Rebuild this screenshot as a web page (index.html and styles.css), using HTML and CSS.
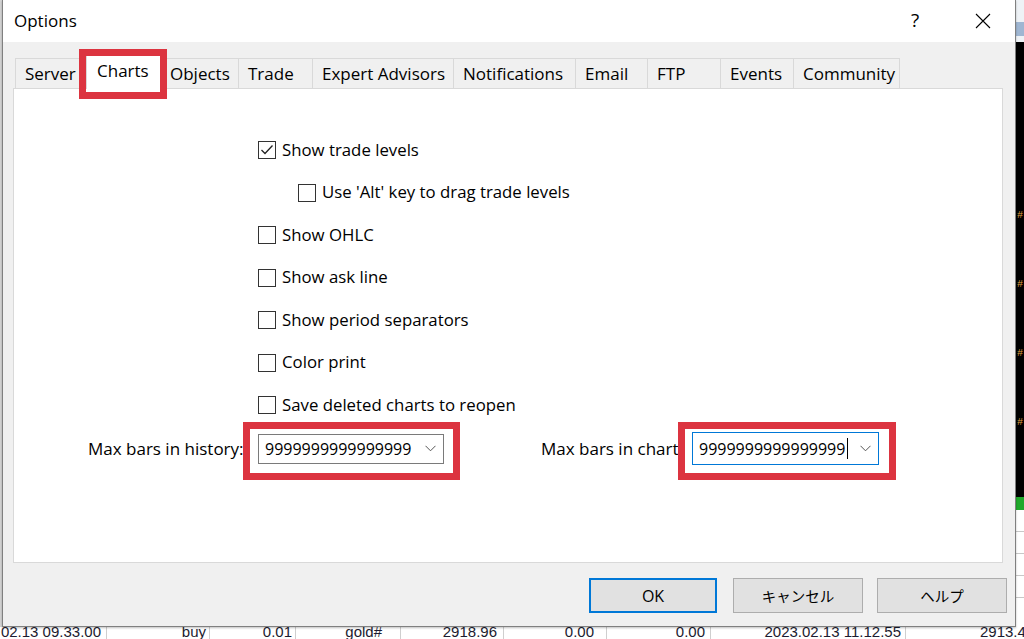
FILE: index.html
```html
<!DOCTYPE html>
<html lang="en">
<head>
<meta charset="utf-8">
<title>Options</title>
<link rel="stylesheet" href="styles.css">
</head>
<body>
<div class="screen">
  <div class="bg-left"></div>

  <div class="dialog">
    <div class="titlebar">
      <span class="title">Options</span>
      <div class="caption-btns">
        <span class="cap-help">?</span>
        <svg class="cap-close" width="16" height="16" viewBox="0 0 16 16"><path d="M1 1 L15 15 M15 1 L1 15" stroke="#000" stroke-width="1.1" fill="none"/></svg>
      </div>
    </div>

    <div class="dlg-body">
      <div class="tabs">
        <div class="tab">Server</div>
        <div class="tab tab-active">Charts</div>
        <div class="tab">Objects</div>
        <div class="tab">Trade</div>
        <div class="tab">Expert Advisors</div>
        <div class="tab">Notifications</div>
        <div class="tab">Email</div>
        <div class="tab">FTP</div>
        <div class="tab">Events</div>
        <div class="tab tab-last">Community</div>
      </div>

      <div class="panel">
        <div class="checks">
          <div class="check">
            <span class="box"><svg width="16" height="16" viewBox="0 0 16 16"><path d="M2.5 8 L6 11.5 L13.5 3.5" stroke="#222" stroke-width="1.3" fill="none"/></svg></span>
            <span>Show trade levels</span>
          </div>
          <div class="check check-indent">
            <span class="box"></span>
            <span>Use 'Alt' key to drag trade levels</span>
          </div>
          <div class="check">
            <span class="box"></span>
            <span>Show OHLC</span>
          </div>
          <div class="check">
            <span class="box"></span>
            <span>Show ask line</span>
          </div>
          <div class="check">
            <span class="box"></span>
            <span>Show period separators</span>
          </div>
          <div class="check">
            <span class="box"></span>
            <span>Color print</span>
          </div>
          <div class="check">
            <span class="box"></span>
            <span>Save deleted charts to reopen</span>
          </div>
        </div>

        <div class="maxrow">
          <div class="field field-history">
            <span class="field-label">Max bars in history:</span>
            <div class="combo">
              <span class="combo-value">9999999999999999</span>
              <svg class="chevron" width="11" height="7" viewBox="0 0 11 7"><path d="M0.5 0.8 L5.5 5.8 L10.5 0.8" stroke="#555" stroke-width="1" fill="none"/></svg>
            </div>
          </div>
          <div class="field field-chart">
            <span class="field-label">Max bars in chart</span>
            <div class="combo combo-focus">
              <span class="combo-value">9999999999999999</span><span class="caret"></span>
              <svg class="chevron" width="11" height="7" viewBox="0 0 11 7"><path d="M0.5 0.8 L5.5 5.8 L10.5 0.8" stroke="#555" stroke-width="1" fill="none"/></svg>
            </div>
          </div>
        </div>
      </div>

      <div class="buttons">
        <button class="btn btn-default">OK</button>
        <button class="btn btn-jp btn-cancel">キャンセル</button>
        <button class="btn btn-jp">ヘルプ</button>
      </div>
    </div>
  </div>

  <div class="bg-right">
    <div class="bgr-top"></div>
    <div class="bgr-chart">
      <span class="hash">#</span>
      <span class="hash">#</span>
      <span class="hash">#</span>
      <span class="hash">#</span>
    </div>
    <div class="bgr-green"></div>
    <div class="bgr-rows">
      <div class="bgr-row"></div>
      <div class="bgr-row"></div>
      <div class="bgr-row"></div>
      <div class="bgr-row"></div>
    </div>
  </div>

  <div class="bg-bottom">
    <div class="cell c1">02.13 09.33.00</div>
    <div class="cell c2">buy</div>
    <div class="cell c3">0.01</div>
    <div class="cell c4">gold#</div>
    <div class="cell c5">2918.96</div>
    <div class="cell c6">0.00</div>
    <div class="cell c7">0.00</div>
    <div class="cell c8">2023.02.13 11.12.55</div>
    <div class="cell c9">2913.4</div>
  </div>

  <span class="mark mark-tab"></span>
  <span class="mark mark-history"></span>
  <span class="mark mark-chart"></span>
</div>
</body>
</html>
```

FILE: styles.css
```css
* { box-sizing: border-box; }

html, body {
  margin: 0;
  padding: 0;
  background: #fff;
}

body {
  font-family: "Open Sans", "Noto Sans CJK JP", sans-serif;
  color: #000;
}

.screen {
  position: relative;
  width: 1024px;
  height: 639px;
  overflow: hidden;
  display: grid;
  grid-template-columns: 2px 1014px 8px;
  grid-template-rows: 627px 12px;
  background: #fff;
}

/* ---------- background window pieces ---------- */
.bg-left {
  grid-column: 1;
  grid-row: 1;
  background: #d4d4d4;
}

.bg-right {
  grid-column: 3;
  grid-row: 1;
  display: flex;
  flex-direction: column;
  background: #fff;
}

.bgr-top {
  height: 42px;
  background: linear-gradient(#eef2f6 0, #eef2f6 22px, #9fb6d2 22px, #9fb6d2 36px, #eef2f6 36px);
}

.bgr-chart {
  height: 455px;
  background: #000;
  display: flex;
  flex-direction: column;
  justify-content: space-around;
  padding: 140px 0 40px;
}

.hash {
  color: #e0a040;
  font-family: "Liberation Mono", monospace;
  font-size: 10px;
  line-height: 10px;
  padding-left: 1px;
}

.bgr-green {
  height: 13px;
  background: #1fa82a;
}

.bgr-rows {
  flex: 1;
  display: flex;
  flex-direction: column;
}

.bgr-row {
  height: 22px;
  border-bottom: 1px solid #c8c8c8;
}

.bg-bottom {
  grid-column: 1 / -1;
  grid-row: 2;
  display: grid;
  grid-template-columns: 107px 103px 86px 105px 103px 103px 104px 195px 118px;
  background: #fff;
  overflow: hidden;
  font-family: "Liberation Sans", Arial, sans-serif;
  font-size: 15px;
  line-height: 9px;
  color: #1c1c30;
}

.cell {
  text-align: right;
  border-right: 1px solid #cfcfcf;
  white-space: nowrap;
  overflow: hidden;
}

.c1 { padding-right: 5px; }
.c2 { padding-right: 3px; }
.c3 { padding-right: 3px; }
.c4 { padding-right: 18px; }
.c5 { padding-right: 6px; }
.c6 { padding-right: 12px; }
.c7 { padding-right: 5px; }
.c8 { padding-right: 4px; }
.c9 { text-align: left; padding-left: 74px; border-right: none; }

/* ---------- dialog ---------- */
.dialog {
  grid-column: 2;
  grid-row: 1;
  display: flex;
  flex-direction: column;
  background: #f0f0f0;
  border: 1px solid #808080;
  border-top: none;
  box-shadow: 0 1px 2px rgba(0, 0, 0, 0.25);
  z-index: 1;
}

.titlebar {
  height: 42px;
  flex: none;
  background: #fff;
  display: flex;
  align-items: center;
  padding-left: 11px;
}

.title {
  font-size: 17px;
  padding-bottom: 2px;
}

.caption-btns {
  margin-left: auto;
  display: flex;
  align-items: center;
  margin-right: 24px;
}

.cap-help {
  width: 20px;
  text-align: center;
  font-size: 19px;
  margin-right: 50px;
  padding-bottom: 3px;
}

.cap-close {
  display: block;
}

.dlg-body {
  flex: 1;
  display: flex;
  flex-direction: column;
  padding: 16px 8px 0 10px;
}

/* ---------- tabs ---------- */
.tabs {
  display: grid;
  grid-template-columns: 73px 72px 78px 74px 141px 122px 72px 73px 73px 107px;
  height: 30px;
  margin-left: 2px;
  position: relative;
  z-index: 2;
}

.tab {
  border-top: 1px solid #d9d9d9;
  border-left: 1px solid #d9d9d9;
  background: #f0f0f0;
  padding-left: 9px;
  font-size: 17px;
  line-height: 29px;
  white-space: nowrap;
}

.tab-last {
  border-right: 1px solid #d9d9d9;
}

.tab-active {
  position: relative;
  z-index: 3;
  margin: -3px -2px -1px -2px;
  background: #fff;
  border-right: 1px solid #d9d9d9;
  padding-left: 10px;
  line-height: 30px;
}

/* ---------- panel ---------- */
.panel {
  height: 475px;
  flex: none;
  margin-right: 4px;
  border: 1px solid #d9d9d9;
  background: #fff;
  padding-top: 40px;
  position: relative;
  z-index: 1;
}

.checks {
  display: flex;
  flex-direction: column;
  padding-left: 244px;
}

.check {
  height: 42.5px;
  display: flex;
  align-items: center;
  gap: 6px;
  font-size: 16.8px;
  white-space: nowrap;
}

.check span:last-child {
  padding-bottom: 2px;
}

.check-indent {
  padding-left: 40px;
}

.box {
  width: 18px;
  height: 18px;
  flex: none;
  border: 1px solid #333;
  background: #fff;
  display: flex;
  align-items: center;
  justify-content: center;
}

.box svg { display: block; }

.maxrow {
  display: flex;
  align-items: center;
  margin-top: 6px;
  padding-left: 74px;
  height: 32px;
}

.field {
  display: flex;
  align-items: center;
}

.field-label {
  font-size: 17px;
  white-space: nowrap;
}

.field-history .field-label { width: 170px; }
.field-history .combo { width: 186px; height: 30px; }

.field-chart { margin-left: 97px; }
.field-chart .field-label { width: 151px; }
.field-chart .combo { width: 187px; height: 33px; }

.combo {
  display: flex;
  align-items: center;
  border: 1px solid #7a7a7a;
  background: #fff;
  padding-left: 6px;
  padding-right: 7px;
}

.combo-focus {
  border-color: #0078d7;
}

.combo-value {
  font-size: 16px;
}

.caret {
  width: 1px;
  height: 21px;
  background: #000;
  margin-left: 2px;
}

.chevron {
  margin-left: auto;
  display: block;
}

/* ---------- buttons ---------- */
.buttons {
  display: flex;
  justify-content: flex-end;
  margin-top: 15px;
}

.btn {
  height: 35px;
  width: 130px;
  background: #e1e1e1;
  border: 1px solid #adadad;
  font-family: "Open Sans", "Noto Sans CJK JP", sans-serif;
  font-size: 16px;
  color: #000;
  padding: 0;
}

.btn-default {
  width: 128px;
  border: 2px solid #0078d7;
  margin-right: 16px;
}

.btn-cancel {
  margin-right: 14px;
}

.btn-jp {
  font-family: "Noto Sans CJK JP", sans-serif;
  font-size: 14.5px;
}

/* ---------- annotation boxes ---------- */
.mark {
  position: absolute;
  border: 7px solid #dc3440;
  z-index: 10;
}

.mark-tab {
  left: 79px;
  top: 49px;
  width: 88px;
  height: 50px;
}

.mark-history {
  left: 243px;
  top: 422px;
  width: 217px;
  height: 58px;
}

.mark-chart {
  left: 678px;
  top: 422px;
  width: 218px;
  height: 58px;
}
```
